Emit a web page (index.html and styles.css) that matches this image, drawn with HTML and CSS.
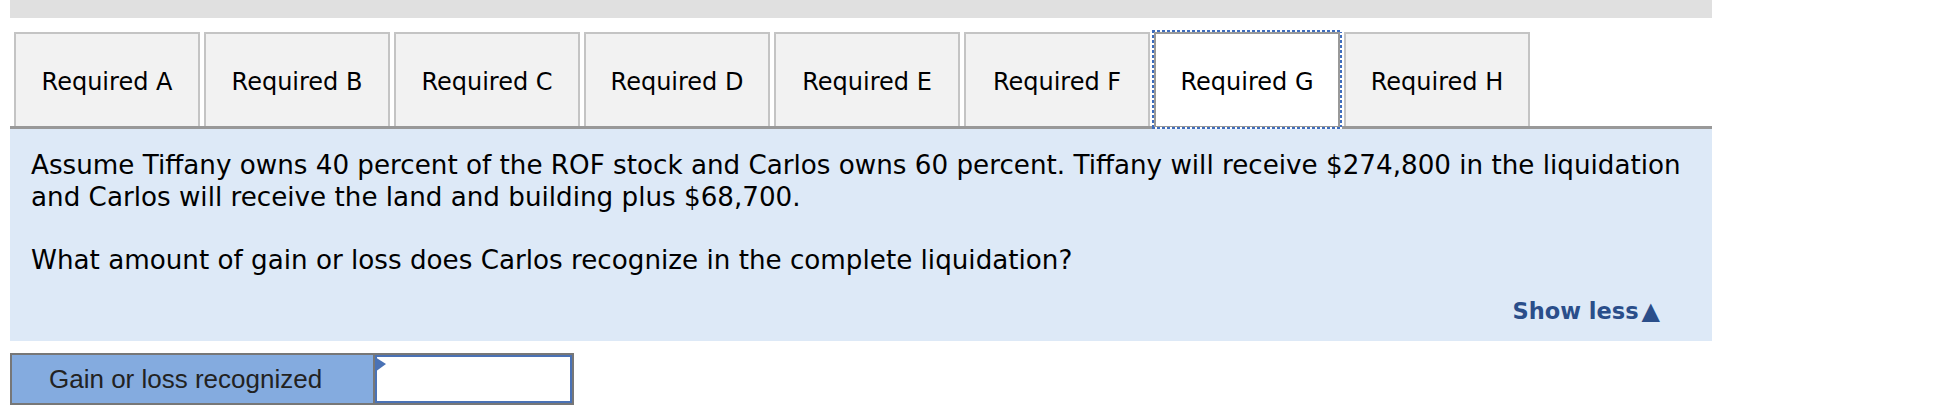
FILE: index.html
```html
<!DOCTYPE html>
<html lang="en">
<head>
    <meta charset="UTF-8">
    <title>Required G</title>
    <link rel="stylesheet" href="styles.css">
</head>
<body>
    <div class="page">
        <div class="top-bar"></div>

        <div class="tabs">
            <button class="tab">Required A</button>
            <button class="tab">Required B</button>
            <button class="tab">Required C</button>
            <button class="tab">Required D</button>
            <button class="tab">Required E</button>
            <button class="tab">Required F</button>
            <button class="tab active">Required G</button>
            <button class="tab">Required H</button>
        </div>

        <div class="question">
            <p>Assume Tiffany owns 40 percent of the ROF stock and Carlos owns 60 percent. Tiffany will receive $274,800 in the liquidation and Carlos will receive the land and building plus $68,700.</p>
            <p>What amount of gain or loss does Carlos recognize in the complete liquidation?</p>
            <div class="toggle"><a class="show-less">Show less<span class="arrow">&#9650;</span></a></div>
        </div>

        <div class="answer">
            <div class="answer-label">Gain or loss recognized</div>
            <div class="answer-input"><span class="marker"></span></div>
        </div>
    </div>
</body>
</html>
```

FILE: styles.css
```css
body {
    margin: 0;
    background-color: #fff;
    font-family: "DejaVu Sans", Verdana, sans-serif;
    color: #000;
}

.page {
    width: 1702px;
    margin-left: 10px;
}

.top-bar {
    height: 18px;
    background-color: #e0e0e0;
}

.tabs {
    display: flex;
    gap: 4px;
    padding: 14px 0 0 4px;
    border-bottom: 3px solid #999;
}

.tab {
    position: relative;
    width: 186px;
    height: 94px;
    background-color: #f2f2f2;
    border: 2px solid #c4c4c4;
    border-bottom: 0;
    font-family: inherit;
    font-size: 24px;
    color: #000;
    padding: 3px 0 0;
}

.tab.active {
    background-color: #fff;
    border-color: #999;
}

/* square dotted focus ring */
.tab.active::after {
    content: "";
    position: absolute;
    top: -4px;
    left: -4px;
    right: -4px;
    bottom: -3px;
    pointer-events: none;
    background:
        repeating-linear-gradient(90deg, #3f6dbd 0 3px, #fff 3px 5px) top left / 100% 2px no-repeat,
        repeating-linear-gradient(90deg, #3f6dbd 0 3px, #fff 3px 5px) bottom left / 100% 2px no-repeat,
        repeating-linear-gradient(180deg, #3f6dbd 0 3px, #fff 3px 5px) top left / 2px 100% no-repeat,
        repeating-linear-gradient(180deg, #3f6dbd 0 3px, #fff 3px 5px) top right / 2px 100% no-repeat;
}

.question {
    background-color: #dde9f7;
    padding: 20px 21px 14px 21px;
    font-size: 26.2px;
    line-height: 32px;
}

.question p {
    margin: 0 0 31px;
}

.toggle {
    text-align: right;
    padding-right: 31px;
    margin-top: -13px;
}

.show-less {
    color: #2a4e8a;
    font-weight: bold;
    font-size: 22.5px;
}

.arrow {
    font-size: 24px;
    margin-left: 3px;
}

.answer {
    display: flex;
    width: 564px;
    height: 52px;
    margin-top: 12px;
    border: 2px solid #777;
    box-sizing: border-box;
}

.answer-label {
    width: 363px;
    border-right: 2px solid #777;
    background-color: #84abdf;
    font-family: "Liberation Sans", Arial, sans-serif;
    font-size: 26px;
    color: #222;
    display: flex;
    align-items: center;
    padding-left: 37px;
    box-sizing: border-box;
}

.answer-input {
    flex: 1;
    position: relative;
    background-color: #fff;
    border: 2px solid #4a72b5;
}

.marker {
    position: absolute;
    left: -2px;
    top: 0;
    width: 0;
    height: 0;
    border-top: 7px solid transparent;
    border-bottom: 8px solid transparent;
    border-left: 11px solid #4a72b5;
}
```
